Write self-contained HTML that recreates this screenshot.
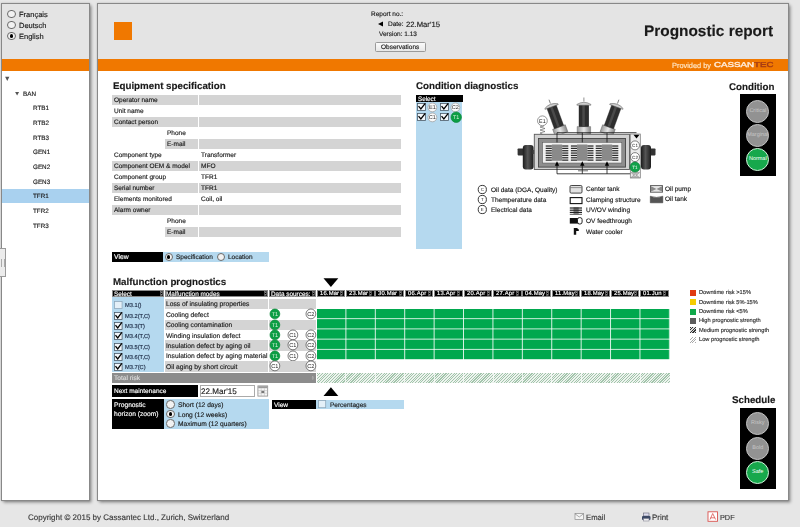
<!DOCTYPE html>
<html><head><meta charset="utf-8">
<style>
*{margin:0;padding:0;box-sizing:border-box}
html,body{width:800px;height:527px;overflow:hidden;background:#e6e6e6;font-family:"Liberation Sans",sans-serif;color:#111;position:relative}
.a{position:absolute}
.t{position:absolute;white-space:nowrap;line-height:1;-webkit-text-stroke:0.15px currentColor;will-change:transform;text-rendering:geometricPrecision}
.panel{position:absolute;background:#fff;border:1px solid #888;box-shadow:1.5px 1.5px 3px rgba(0,0,0,.38),0 0 2px rgba(0,0,0,.18)}
.radio{position:absolute;border-radius:50%;border:1px solid #6a6a6a;background:#f2f2f2}
.radio.on::after{content:"";position:absolute;left:22%;top:22%;right:22%;bottom:22%;border-radius:50%;background:#000}
.cb{position:absolute;border:1px solid #555;background:#f4f8fb}
svg{will-change:transform}
svg text{text-rendering:geometricPrecision}
.bd{position:absolute;border-radius:50%;text-align:center;white-space:nowrap;overflow:visible;font-family:"Liberation Sans",sans-serif}
</style></head><body>

<div class="panel" style="left:1px;top:3px;width:89px;height:498px;"></div>
<div class="a" style="left:2.00px;top:4.00px;width:87.00px;height:54.50px;background:#e4e4e4;"></div>
<div class="a" style="left:2.00px;top:58.50px;width:87.00px;height:12.40px;background:#f07800;"></div>
<div class="radio" style="left:7.10px;top:9.70px;width:8.60px;height:8.60px"></div>
<div class="t" style="left:19.00px;top:11.25px;font-size:7.5px;color:#1a1a1a;">Français</div>
<div class="radio" style="left:7.10px;top:20.60px;width:8.60px;height:8.60px"></div>
<div class="t" style="left:19.00px;top:22.15px;font-size:7.5px;color:#1a1a1a;">Deutsch</div>
<div class="radio on" style="left:7.10px;top:31.50px;width:8.60px;height:8.60px"></div>
<div class="t" style="left:19.00px;top:33.05px;font-size:7.5px;color:#1a1a1a;">English</div>
<div class="a" style="left:2.00px;top:189.30px;width:87.00px;height:13.90px;background:#a9d1ef;"></div>
<svg class="a" style="left:0;top:70px" width="25" height="30"><path d="M5.1 6.8 L9.4 6.8 L7.25 11.1 Z M15.1 21.9 L19.1 21.9 L17.1 25.6 Z" fill="#555"/></svg>
<div class="t" style="left:23.00px;top:92.37px;font-size:6.3px;color:#1a1a1a;">BAN</div>
<div class="t" style="left:33.00px;top:106.17px;font-size:6.3px;color:#1a1a1a;">RTB1</div>
<div class="t" style="left:33.00px;top:120.87px;font-size:6.3px;color:#1a1a1a;">RTB2</div>
<div class="t" style="left:33.00px;top:135.57px;font-size:6.3px;color:#1a1a1a;">RTB3</div>
<div class="t" style="left:33.00px;top:150.27px;font-size:6.3px;color:#1a1a1a;">GEN1</div>
<div class="t" style="left:33.00px;top:164.97px;font-size:6.3px;color:#1a1a1a;">GEN2</div>
<div class="t" style="left:33.00px;top:179.67px;font-size:6.3px;color:#1a1a1a;">GEN3</div>
<div class="t" style="left:33.00px;top:194.37px;font-size:6.3px;color:#1a1a1a;">TFR1</div>
<div class="t" style="left:33.00px;top:209.07px;font-size:6.3px;color:#1a1a1a;">TFR2</div>
<div class="t" style="left:33.00px;top:223.77px;font-size:6.3px;color:#1a1a1a;">TFR3</div>
<div class="a" style="left:0;top:248px;width:6px;height:29px;background:#ececec;border:1px solid #9a9a9a;border-left:none"></div>
<div class="a" style="left:1px;top:258.5px;width:3.5px;height:8px;border-left:0.8px solid #aaa;border-right:0.8px solid #aaa"></div>
<div class="panel" style="left:97px;top:3px;width:692px;height:498px;"></div>
<div class="a" style="left:98.00px;top:4.00px;width:690.00px;height:54.50px;background:#e4e4e4;"></div>
<div class="a" style="left:98.00px;top:58.50px;width:690.00px;height:12.40px;background:#f07800;"></div>
<div class="a" style="left:114.00px;top:22.00px;width:18.00px;height:18.00px;background:#f07800;"></div>
<div class="t" style="left:371.00px;top:11.70px;font-size:6.5px;color:#1a1a1a;">Report no.:</div>
<svg class="a" style="left:377px;top:21px" width="7" height="6"><path d="M1 3 L6 0.5 L6 5.5 Z" fill="#000"/></svg>
<div class="t" style="left:388.00px;top:22.20px;font-size:6.5px;color:#1a1a1a;">Date:</div>
<div class="t" style="left:406.00px;top:21.48px;font-size:7.7px;color:#1a1a1a;">22.Mar'15</div>
<div class="t" style="left:379.00px;top:31.70px;font-size:6.5px;color:#1a1a1a;">Version: 1.13</div>
<div class="a" style="left:375px;top:41.5px;width:51px;height:10.5px;border:1px solid #9a9a9a;border-radius:1.5px;background:linear-gradient(#fbfbfb,#e8e8e8)"></div>
<div class="t" style="left:381.00px;top:45.30px;font-size:6.5px;color:#1a1a1a;">Observations</div>
<div class="t" style="left:644.40px;top:24.16px;font-size:15.4px;font-weight:bold;color:#1a1a1a;">Prognostic report</div>
<div class="t" style="right:89.20px;top:62.14px;font-size:7.4px;color:#ffe7c8;">Provided by</div>
<div class="t" style="left:714px;top:61.8px;font-size:7.1px;line-height:1;transform:scaleX(1.375);transform-origin:0 0;-webkit-text-stroke:0.35px currentColor;color:#ffeede"><span>CASSAN</span><span style="color:#a43a14">TEC</span></div>
<div class="t" style="left:112.50px;top:81.95px;font-size:9.75px;font-weight:bold;color:#1a1a1a;">Equipment specification</div>
<div class="a" style="left:112.00px;top:95.00px;width:86.00px;height:10.00px;background:#d4d4d4;"></div>
<div class="a" style="left:199.20px;top:95.00px;width:202.00px;height:10.00px;background:#d4d4d4;"></div>
<div class="t" style="left:114.00px;top:97.70px;font-size:6.5px;color:#1a1a1a;">Operator name</div>
<div class="t" style="left:114.00px;top:108.70px;font-size:6.5px;color:#1a1a1a;">Unit name</div>
<div class="a" style="left:112.00px;top:117.00px;width:86.00px;height:10.00px;background:#d4d4d4;"></div>
<div class="a" style="left:199.20px;top:117.00px;width:202.00px;height:10.00px;background:#d4d4d4;"></div>
<div class="t" style="left:114.00px;top:119.70px;font-size:6.5px;color:#1a1a1a;">Contact person</div>
<div class="t" style="left:166.50px;top:130.70px;font-size:6.5px;color:#1a1a1a;">Phone</div>
<div class="a" style="left:164.50px;top:139.00px;width:33.50px;height:10.00px;background:#d4d4d4;"></div>
<div class="a" style="left:199.20px;top:139.00px;width:202.00px;height:10.00px;background:#d4d4d4;"></div>
<div class="t" style="left:166.50px;top:141.70px;font-size:6.5px;color:#1a1a1a;">E-mail</div>
<div class="t" style="left:114.00px;top:152.70px;font-size:6.5px;color:#1a1a1a;">Component type</div>
<div class="t" style="left:201.00px;top:152.70px;font-size:6.5px;color:#1a1a1a;">Transformer</div>
<div class="a" style="left:112.00px;top:161.00px;width:86.00px;height:10.00px;background:#d4d4d4;"></div>
<div class="a" style="left:199.20px;top:161.00px;width:202.00px;height:10.00px;background:#d4d4d4;"></div>
<div class="t" style="left:114.00px;top:163.70px;font-size:6.5px;color:#1a1a1a;">Component OEM &amp; model</div>
<div class="t" style="left:201.00px;top:163.70px;font-size:6.5px;color:#1a1a1a;">MFO</div>
<div class="t" style="left:114.00px;top:174.70px;font-size:6.5px;color:#1a1a1a;">Component group</div>
<div class="t" style="left:201.00px;top:174.70px;font-size:6.5px;color:#1a1a1a;">TFR1</div>
<div class="a" style="left:112.00px;top:183.00px;width:86.00px;height:10.00px;background:#d4d4d4;"></div>
<div class="a" style="left:199.20px;top:183.00px;width:202.00px;height:10.00px;background:#d4d4d4;"></div>
<div class="t" style="left:114.00px;top:185.70px;font-size:6.5px;color:#1a1a1a;">Serial number</div>
<div class="t" style="left:201.00px;top:185.70px;font-size:6.5px;color:#1a1a1a;">TFR1</div>
<div class="t" style="left:114.00px;top:196.70px;font-size:6.5px;color:#1a1a1a;">Elements monitored</div>
<div class="t" style="left:201.00px;top:196.70px;font-size:6.5px;color:#1a1a1a;">Coil, oil</div>
<div class="a" style="left:112.00px;top:205.00px;width:86.00px;height:10.00px;background:#d4d4d4;"></div>
<div class="a" style="left:199.20px;top:205.00px;width:202.00px;height:10.00px;background:#d4d4d4;"></div>
<div class="t" style="left:114.00px;top:207.70px;font-size:6.5px;color:#1a1a1a;">Alarm owner</div>
<div class="t" style="left:166.50px;top:218.70px;font-size:6.5px;color:#1a1a1a;">Phone</div>
<div class="a" style="left:164.50px;top:227.00px;width:33.50px;height:10.00px;background:#d4d4d4;"></div>
<div class="a" style="left:199.20px;top:227.00px;width:202.00px;height:10.00px;background:#d4d4d4;"></div>
<div class="t" style="left:166.50px;top:229.70px;font-size:6.5px;color:#1a1a1a;">E-mail</div>
<div class="a" style="left:112.40px;top:251.70px;width:51.00px;height:10.00px;background:#000;"></div>
<div class="t" style="left:114.00px;top:254.74px;font-size:6.8px;color:#fff;">View</div>
<div class="a" style="left:163.40px;top:251.70px;width:105.20px;height:10.00px;background:#b5d9ef;"></div>
<div class="radio on" style="left:164.75px;top:253.00px;width:8.00px;height:8.00px"></div>
<div class="t" style="left:175.80px;top:255.10px;font-size:6.5px;color:#1a1a1a;">Specification</div>
<div class="radio" style="left:216.80px;top:253.00px;width:8.00px;height:8.00px"></div>
<div class="t" style="left:227.80px;top:255.10px;font-size:6.5px;color:#1a1a1a;">Location</div>
<div class="t" style="left:416.00px;top:82.45px;font-size:9.75px;font-weight:bold;color:#1a1a1a;">Condition diagnostics</div>
<div class="a" style="left:416.00px;top:95.00px;width:46.50px;height:7.00px;background:#000;"></div>
<div class="t" style="left:417.50px;top:97.17px;font-size:6.3px;color:#fff;">Select</div>
<div class="a" style="left:416.00px;top:102.00px;width:46.20px;height:147.30px;background:#b5d9ef;"></div>
<svg class="a" style="left:416.70px;top:103.30px;overflow:visible" width="9.00" height="8.00" viewBox="-0.5 -0.5 9.00 8.00"><rect x="0" y="0" width="8.00" height="7.00" fill="#f2f6fa" stroke="#4a5a68" stroke-width="0.8"/><path d="M1.44 3.15 L3.36 5.46 L7.36 0.35" fill="none" stroke="#000" stroke-width="1.25" stroke-linecap="square"/></svg>
<svg class="a" style="left:440.20px;top:103.30px;overflow:visible" width="9.00" height="8.00" viewBox="-0.5 -0.5 9.00 8.00"><rect x="0" y="0" width="8.00" height="7.00" fill="#f2f6fa" stroke="#4a5a68" stroke-width="0.8"/><path d="M1.44 3.15 L3.36 5.46 L7.36 0.35" fill="none" stroke="#000" stroke-width="1.25" stroke-linecap="square"/></svg>
<svg class="a" style="left:416.70px;top:113.40px;overflow:visible" width="9.00" height="8.00" viewBox="-0.5 -0.5 9.00 8.00"><rect x="0" y="0" width="8.00" height="7.00" fill="#f2f6fa" stroke="#4a5a68" stroke-width="0.8"/><path d="M1.44 3.15 L3.36 5.46 L7.36 0.35" fill="none" stroke="#000" stroke-width="1.25" stroke-linecap="square"/></svg>
<svg class="a" style="left:440.20px;top:113.40px;overflow:visible" width="9.00" height="8.00" viewBox="-0.5 -0.5 9.00 8.00"><rect x="0" y="0" width="8.00" height="7.00" fill="#f2f6fa" stroke="#4a5a68" stroke-width="0.8"/><path d="M1.44 3.15 L3.36 5.46 L7.36 0.35" fill="none" stroke="#000" stroke-width="1.25" stroke-linecap="square"/></svg>
<svg class="a" style="left:426.80px;top:101.90px;overflow:visible" width="10.80" height="10.80"><circle cx="5.40" cy="5.40" r="4.40" fill="#fafafa" stroke="#9a9a9a" stroke-width="0.7"/><g transform="translate(5.40 7.42) scale(0.1)"><text x="0" y="0" font-size="56.0" text-anchor="middle" fill="#333" font-family="Liberation Sans">E1</text></g></svg>
<svg class="a" style="left:449.60px;top:101.90px;overflow:visible" width="10.80" height="10.80"><circle cx="5.40" cy="5.40" r="4.40" fill="#fafafa" stroke="#9a9a9a" stroke-width="0.7"/><g transform="translate(5.40 7.42) scale(0.1)"><text x="0" y="0" font-size="56.0" text-anchor="middle" fill="#333" font-family="Liberation Sans">C2</text></g></svg>
<svg class="a" style="left:426.80px;top:112.10px;overflow:visible" width="10.80" height="10.80"><circle cx="5.40" cy="5.40" r="4.40" fill="#fafafa" stroke="#9a9a9a" stroke-width="0.7"/><g transform="translate(5.40 7.42) scale(0.1)"><text x="0" y="0" font-size="56.0" text-anchor="middle" fill="#333" font-family="Liberation Sans">C1</text></g></svg>
<svg class="a" style="left:449.50px;top:111.30px;overflow:visible" width="12.40" height="12.40"><circle cx="6.20" cy="6.20" r="5.20" fill="#0c9e45" stroke="#0a8a3a" stroke-width="0.7"/><g transform="translate(6.20 8.14) scale(0.1)"><text x="0" y="0" font-size="54.0" text-anchor="middle" fill="#d8f5dc" font-family="Liberation Sans">T1</text></g></svg>
<svg class="a" style="left:510px;top:90px" width="150" height="95" viewBox="510 90 150 95">
<defs><linearGradient id="wg" x1="0" x2="1"><stop offset="0" stop-color="#1c1c1c"/><stop offset="0.45" stop-color="#555"/><stop offset="1" stop-color="#1e1e1e"/></linearGradient><linearGradient id="bg" x1="0" x2="1"><stop offset="0" stop-color="#9a9a9a"/><stop offset="0.5" stop-color="#e8e8e8"/><stop offset="1" stop-color="#888"/></linearGradient></defs>
<rect x="517.6" y="148.4" width="6" height="7" fill="#333" rx="0.8"/>
<rect x="522.8" y="144.9" width="10.8" height="24.5" rx="3" fill="url(#wg)"/>
<rect x="650" y="148.4" width="5.5" height="7" fill="#333" rx="0.8"/>
<rect x="641" y="144.9" width="10" height="24.5" rx="3" fill="url(#wg)"/>
<rect x="532.5" y="150" width="2" height="4" fill="#444"/>
<g transform="rotate(0 583.9 134)"><path d="M577.1999999999999 134 L590.6 134 L590.6 126.6 L577.1999999999999 126.6 Z" fill="url(#bg)" stroke="#666" stroke-width="0.5"/><rect x="579.0" y="104.2" width="9.8" height="22.4" fill="#2e2e2e" stroke="#222" stroke-width="0.4"/><rect x="582.3" y="105" width="2.5" height="21" fill="#4a4a4a"/><path d="M576.9 104.4 Q583.9 100.2 590.9 104.4 L590.9 105.2 L576.9 105.2 Z" fill="#cfcfcf" stroke="#555" stroke-width="0.5"/><path d="M583.9 101.5 V97.5" stroke="#444" stroke-width="0.6"/></g>
<g transform="rotate(-20 561.5 134)"><path d="M554.8 134 L568.2 134 L568.2 126.6 L554.8 126.6 Z" fill="url(#bg)" stroke="#666" stroke-width="0.5"/><rect x="556.6" y="104.2" width="9.8" height="22.4" fill="#2e2e2e" stroke="#222" stroke-width="0.4"/><rect x="559.9" y="105" width="2.5" height="21" fill="#4a4a4a"/><path d="M554.5 104.4 Q561.5 100.2 568.5 104.4 L568.5 105.2 L554.5 105.2 Z" fill="#cfcfcf" stroke="#555" stroke-width="0.5"/><path d="M561.5 101.5 V97.5" stroke="#444" stroke-width="0.6"/></g>
<g transform="rotate(20 606.4 134)"><path d="M599.6999999999999 134 L613.1 134 L613.1 126.6 L599.6999999999999 126.6 Z" fill="url(#bg)" stroke="#666" stroke-width="0.5"/><rect x="601.5" y="104.2" width="9.8" height="22.4" fill="#2e2e2e" stroke="#222" stroke-width="0.4"/><rect x="604.8" y="105" width="2.5" height="21" fill="#4a4a4a"/><path d="M599.4 104.4 Q606.4 100.2 613.4 104.4 L613.4 105.2 L599.4 105.2 Z" fill="#cfcfcf" stroke="#555" stroke-width="0.5"/><path d="M606.4 101.5 V97.5" stroke="#444" stroke-width="0.6"/></g>
<rect x="534.3" y="134.3" width="95.2" height="35.2" fill="#d2d2d2" stroke="#5a5a5a" stroke-width="0.9"/>
<rect x="538.5" y="138.5" width="87" height="28.6" fill="#8e8e8e" stroke="#444" stroke-width="0.9"/>
<rect x="542.6" y="142.4" width="79.2" height="20.6" fill="#f0f0f0" stroke="#555" stroke-width="0.5"/>
<rect x="551.80" y="144.5" width="10.4" height="16.3" fill="#8a8a8a"/>
<rect x="545.70" y="145.40" width="6.1" height="1.25" fill="#2a2a2a"/>
<rect x="562.20" y="145.40" width="6.1" height="1.25" fill="#2a2a2a"/>
<rect x="545.70" y="147.75" width="6.1" height="1.25" fill="#2a2a2a"/>
<rect x="562.20" y="147.75" width="6.1" height="1.25" fill="#2a2a2a"/>
<rect x="545.70" y="150.10" width="6.1" height="1.25" fill="#2a2a2a"/>
<rect x="562.20" y="150.10" width="6.1" height="1.25" fill="#2a2a2a"/>
<rect x="545.70" y="152.45" width="6.1" height="1.25" fill="#2a2a2a"/>
<rect x="562.20" y="152.45" width="6.1" height="1.25" fill="#2a2a2a"/>
<rect x="545.70" y="154.80" width="6.1" height="1.25" fill="#2a2a2a"/>
<rect x="562.20" y="154.80" width="6.1" height="1.25" fill="#2a2a2a"/>
<rect x="545.70" y="157.15" width="6.1" height="1.25" fill="#2a2a2a"/>
<rect x="562.20" y="157.15" width="6.1" height="1.25" fill="#2a2a2a"/>
<rect x="545.70" y="159.50" width="6.1" height="1.25" fill="#2a2a2a"/>
<rect x="562.20" y="159.50" width="6.1" height="1.25" fill="#2a2a2a"/>
<rect x="577.00" y="144.5" width="10.4" height="16.3" fill="#8a8a8a"/>
<rect x="570.90" y="145.40" width="6.1" height="1.25" fill="#2a2a2a"/>
<rect x="587.40" y="145.40" width="6.1" height="1.25" fill="#2a2a2a"/>
<rect x="570.90" y="147.75" width="6.1" height="1.25" fill="#2a2a2a"/>
<rect x="587.40" y="147.75" width="6.1" height="1.25" fill="#2a2a2a"/>
<rect x="570.90" y="150.10" width="6.1" height="1.25" fill="#2a2a2a"/>
<rect x="587.40" y="150.10" width="6.1" height="1.25" fill="#2a2a2a"/>
<rect x="570.90" y="152.45" width="6.1" height="1.25" fill="#2a2a2a"/>
<rect x="587.40" y="152.45" width="6.1" height="1.25" fill="#2a2a2a"/>
<rect x="570.90" y="154.80" width="6.1" height="1.25" fill="#2a2a2a"/>
<rect x="587.40" y="154.80" width="6.1" height="1.25" fill="#2a2a2a"/>
<rect x="570.90" y="157.15" width="6.1" height="1.25" fill="#2a2a2a"/>
<rect x="587.40" y="157.15" width="6.1" height="1.25" fill="#2a2a2a"/>
<rect x="570.90" y="159.50" width="6.1" height="1.25" fill="#2a2a2a"/>
<rect x="587.40" y="159.50" width="6.1" height="1.25" fill="#2a2a2a"/>
<rect x="601.80" y="144.5" width="10.4" height="16.3" fill="#8a8a8a"/>
<rect x="595.70" y="145.40" width="6.1" height="1.25" fill="#2a2a2a"/>
<rect x="612.20" y="145.40" width="6.1" height="1.25" fill="#2a2a2a"/>
<rect x="595.70" y="147.75" width="6.1" height="1.25" fill="#2a2a2a"/>
<rect x="612.20" y="147.75" width="6.1" height="1.25" fill="#2a2a2a"/>
<rect x="595.70" y="150.10" width="6.1" height="1.25" fill="#2a2a2a"/>
<rect x="612.20" y="150.10" width="6.1" height="1.25" fill="#2a2a2a"/>
<rect x="595.70" y="152.45" width="6.1" height="1.25" fill="#2a2a2a"/>
<rect x="612.20" y="152.45" width="6.1" height="1.25" fill="#2a2a2a"/>
<rect x="595.70" y="154.80" width="6.1" height="1.25" fill="#2a2a2a"/>
<rect x="612.20" y="154.80" width="6.1" height="1.25" fill="#2a2a2a"/>
<rect x="595.70" y="157.15" width="6.1" height="1.25" fill="#2a2a2a"/>
<rect x="612.20" y="157.15" width="6.1" height="1.25" fill="#2a2a2a"/>
<rect x="595.70" y="159.50" width="6.1" height="1.25" fill="#2a2a2a"/>
<rect x="612.20" y="159.50" width="6.1" height="1.25" fill="#2a2a2a"/>
<path d="M557 132.7 H636.5 M557 132.7 V142.4 M582.3 132.7 V142.4 M607 132.7 V142.4" stroke="#111" stroke-width="0.8" fill="none"/>
<path d="M557 165 V173.8 H637 M582.3 165 V173.8 M607 165 V173.8" stroke="#111" stroke-width="0.8" fill="none"/>
<path d="M554.80 165.8 L559.20 165.8 L557.00 161.3 Z" fill="#000"/>
<path d="M580.10 165.8 L584.50 165.8 L582.30 161.3 Z" fill="#000"/>
<path d="M604.80 165.8 L609.20 165.8 L607.00 161.3 Z" fill="#000"/>
<path d="M578 170.8 H588" stroke="#333" stroke-width="0.7"/>
<rect x="630.3" y="134" width="10" height="44" fill="#ececec" stroke="#777" stroke-width="0.7"/>
<path d="M633.5 134.8 L639.5 134.8 L636.5 138.5 Z" fill="#000"/>
<path d="M631 172.5 L639.5 172.5 L635.2 176.5 Z M631 177.5 L639.5 177.5 L635.2 174 Z" fill="#bbb" stroke="#777" stroke-width="0.4"/>
<path d="M542.4 134 L540 133 L545 131.5 L540 130 L545 128.5 L540 127 L544 126" stroke="#555" stroke-width="0.6" fill="none"/>
<circle cx="542.4" cy="120.8" r="4.9" fill="#fff" stroke="#555" stroke-width="0.6"/>
<text x="542.4" y="122.8" font-size="5.4" text-anchor="middle" fill="#222" font-family="Liberation Sans">E1</text>
<circle cx="635" cy="145.4" r="4.5" fill="#fff" stroke="#333" stroke-width="0.6"/>
<text x="635" y="147.1" font-size="4.6" text-anchor="middle" fill="#222" font-family="Liberation Sans">C1</text>
<circle cx="635" cy="157.1" r="4.5" fill="#fff" stroke="#333" stroke-width="0.6"/>
<text x="635" y="158.8" font-size="4.6" text-anchor="middle" fill="#222" font-family="Liberation Sans">C2</text>
<circle cx="635" cy="167.1" r="5" fill="#12a24a" stroke="#0b7a36" stroke-width="0.6"/>
<text x="635" y="168.8" font-size="4.6" text-anchor="middle" fill="#fff" font-family="Liberation Sans">T1</text>
</svg>
<svg class="a" style="left:477px;top:183.80px" width="11" height="11"><circle cx="5.3" cy="5.5" r="4.1" fill="#fff" stroke="#222" stroke-width="0.9"/><text x="5.3" y="7.1" font-size="4.4" text-anchor="middle" fill="#222" font-family="Liberation Sans">C</text></svg>
<div class="t" style="left:490.50px;top:187.67px;font-size:6.5px;color:#1a1a1a">Oil data (DGA, Quality)</div>
<svg class="a" style="left:477px;top:193.90px" width="11" height="11"><circle cx="5.3" cy="5.5" r="4.1" fill="#fff" stroke="#222" stroke-width="0.9"/><text x="5.3" y="7.1" font-size="4.4" text-anchor="middle" fill="#222" font-family="Liberation Sans">T</text></svg>
<div class="t" style="left:490.50px;top:197.77px;font-size:6.5px;color:#1a1a1a">Themperature data</div>
<svg class="a" style="left:477px;top:204.00px" width="11" height="11"><circle cx="5.3" cy="5.5" r="4.1" fill="#fff" stroke="#222" stroke-width="0.9"/><text x="5.3" y="7.1" font-size="4.4" text-anchor="middle" fill="#222" font-family="Liberation Sans">E</text></svg>
<div class="t" style="left:490.50px;top:207.87px;font-size:6.5px;color:#1a1a1a">Electrical data</div>
<svg class="a" style="left:568px;top:183px" width="20" height="55" viewBox="568 183 20 55"><rect x="570" y="185.5" width="12" height="7.6" rx="1.2" fill="#e2e2e2" stroke="#333" stroke-width="0.9"/><path d="M570.5 187.6 H581.5" stroke="#555" stroke-width="0.6"/><rect x="570.2" y="197.6" width="11.8" height="6" fill="#fff" stroke="#111" stroke-width="1.1"/><rect x="573.5" y="207.3" width="5.2" height="7" fill="#888"/><rect x="569.8" y="207.4" width="12.2" height="1.2" fill="#222"/><rect x="569.8" y="209.6" width="12.2" height="1.2" fill="#222"/><rect x="569.8" y="211.8" width="12.2" height="1.2" fill="#222"/><rect x="569.8" y="213.8" width="12.2" height="1.0" fill="#555"/><rect x="569.8" y="218" width="9" height="5.6" fill="#111"/><rect x="577.5" y="217.6" width="4.6" height="6.4" rx="2" fill="#fff" stroke="#111" stroke-width="0.9"/><path d="M573.8 228 H577 L578.8 229.5 L578.8 231 L576.2 231 L576.2 234.7 L573.8 234.7 Z" fill="#111"/></svg>
<div class="t" style="left:585.60px;top:187.47px;font-size:6.5px;color:#1a1a1a">Center tank</div>
<div class="t" style="left:585.60px;top:198.27px;font-size:6.5px;color:#1a1a1a">Clamping structure</div>
<div class="t" style="left:585.60px;top:208.17px;font-size:6.5px;color:#1a1a1a">UV/OV winding</div>
<div class="t" style="left:585.60px;top:218.77px;font-size:6.5px;color:#1a1a1a">OV feedthrough</div>
<div class="t" style="left:585.60px;top:229.87px;font-size:6.5px;color:#1a1a1a">Water cooler</div>
<svg class="a" style="left:649px;top:184px" width="16" height="20" viewBox="649 184 16 20"><rect x="650.5" y="185.6" width="12" height="6.6" fill="#e6e6e6" stroke="#555" stroke-width="0.9"/><path d="M651 186.2 L656.5 188.9 L651 191.6 Z M662 186.2 L656.5 188.9 L662 191.6 Z" fill="#8a8a8a"/><path d="M650.3 196.2 V202.8 H662.8 V196.2 Q656.5 198.6 650.3 196.2 Z" fill="#555" stroke="#333" stroke-width="0.5"/></svg>
<div class="t" style="left:665.10px;top:186.97px;font-size:6.5px;color:#1a1a1a">Oil pump</div>
<div class="t" style="left:665.10px;top:197.47px;font-size:6.5px;color:#1a1a1a">Oil tank</div>
<div class="t" style="left:729.00px;top:82.95px;font-size:9.75px;font-weight:bold;color:#1a1a1a;">Condition</div>
<div class="a" style="left:740.00px;top:94.30px;width:35.80px;height:81.30px;background:#000;"></div>
<div class="bd" style="left:746.20px;top:100.00px;width:23.2px;height:23.2px;background:#929292;border:1px solid #c2c2c2;color:#c6c6c6;font-size:5.5px;line-height:21.2px;text-rendering:geometricPrecision">Critical</div>
<div class="bd" style="left:746.20px;top:123.90px;width:23.2px;height:23.2px;background:#929292;border:1px solid #c2c2c2;color:#c6c6c6;font-size:5.5px;line-height:21.2px;text-rendering:geometricPrecision">Marginal</div>
<div class="bd" style="left:746.20px;top:147.80px;width:23.2px;height:23.2px;background:#17a84c;border:1px solid #d0f2da;color:#ffffff;font-size:5.5px;line-height:21.2px;text-rendering:geometricPrecision">Normal</div>
<div class="t" style="left:112.50px;top:278.15px;font-size:9.75px;font-weight:bold;color:#1a1a1a;">Malfunction prognostics</div>
<svg class="a" style="left:323px;top:278px" width="16" height="10"><path d="M0.5 0.3 L15.3 0.3 L7.9 9 Z" fill="#000"/></svg>
<div class="a" style="left:112.00px;top:290.2px;width:51.50px;height:7.3px;background:#000;border:0.6px solid #8a8a8a"></div>
<div class="t" style="left:113.60px;top:292.08px;font-size:6.4px;color:#ffffff;letter-spacing:0px">Select</div>
<svg class="a" style="left:159.50px;top:291.3px" width="3" height="5"><rect x="0.3" y="0.3" width="2.2" height="4.4" fill="none" stroke="#999" stroke-width="0.5"/><path d="M0.7 2.1 L1.4 1.0 L2.1 2.1 Z M0.7 2.9 L1.4 4.0 L2.1 2.9 Z" fill="#ccc"/></svg>
<div class="a" style="left:164.70px;top:290.2px;width:103.30px;height:7.3px;background:#000;border:0.6px solid #8a8a8a"></div>
<div class="t" style="left:166.30px;top:292.08px;font-size:6.4px;color:#ffffff;letter-spacing:0px">Malfunction modes</div>
<svg class="a" style="left:264.00px;top:291.3px" width="3" height="5"><rect x="0.3" y="0.3" width="2.2" height="4.4" fill="none" stroke="#999" stroke-width="0.5"/><path d="M0.7 2.1 L1.4 1.0 L2.1 2.1 Z M0.7 2.9 L1.4 4.0 L2.1 2.9 Z" fill="#ccc"/></svg>
<div class="a" style="left:269.40px;top:290.2px;width:46.60px;height:7.3px;background:#000;border:0.6px solid #8a8a8a"></div>
<div class="t" style="left:271.20px;top:292.08px;font-size:6.4px;color:#ffffff;letter-spacing:0px">Data sources:</div>
<svg class="a" style="left:312.00px;top:291.3px" width="3" height="5"><rect x="0.3" y="0.3" width="2.2" height="4.4" fill="none" stroke="#999" stroke-width="0.5"/><path d="M0.7 2.1 L1.4 1.0 L2.1 2.1 Z M0.7 2.9 L1.4 4.0 L2.1 2.9 Z" fill="#ccc"/></svg>
<div class="a" style="left:316.50px;top:290.2px;width:28.60px;height:7.3px;background:#000;border:0.6px solid #8a8a8a"></div>
<div class="t" style="left:319.50px;top:292.21px;font-size:5.9px;color:#ffffff;letter-spacing:0.15px">16.Mar</div>
<svg class="a" style="left:339.80px;top:291.3px" width="3" height="5"><rect x="0.3" y="0.3" width="2.2" height="4.4" fill="none" stroke="#999" stroke-width="0.5"/><path d="M0.7 2.1 L1.4 1.0 L2.1 2.1 Z M0.7 2.9 L1.4 4.0 L2.1 2.9 Z" fill="#ccc"/></svg>
<div class="a" style="left:345.92px;top:290.2px;width:28.60px;height:7.3px;background:#000;border:0.6px solid #8a8a8a"></div>
<div class="t" style="left:348.92px;top:292.21px;font-size:5.9px;color:#ffffff;letter-spacing:0.15px">23.Mar</div>
<svg class="a" style="left:369.22px;top:291.3px" width="3" height="5"><rect x="0.3" y="0.3" width="2.2" height="4.4" fill="none" stroke="#999" stroke-width="0.5"/><path d="M0.7 2.1 L1.4 1.0 L2.1 2.1 Z M0.7 2.9 L1.4 4.0 L2.1 2.9 Z" fill="#ccc"/></svg>
<div class="a" style="left:375.34px;top:290.2px;width:28.60px;height:7.3px;background:#000;border:0.6px solid #8a8a8a"></div>
<div class="t" style="left:378.34px;top:292.21px;font-size:5.9px;color:#ffffff;letter-spacing:0.15px">30.Mar</div>
<svg class="a" style="left:398.64px;top:291.3px" width="3" height="5"><rect x="0.3" y="0.3" width="2.2" height="4.4" fill="none" stroke="#999" stroke-width="0.5"/><path d="M0.7 2.1 L1.4 1.0 L2.1 2.1 Z M0.7 2.9 L1.4 4.0 L2.1 2.9 Z" fill="#ccc"/></svg>
<div class="a" style="left:404.76px;top:290.2px;width:28.60px;height:7.3px;background:#000;border:0.6px solid #8a8a8a"></div>
<div class="t" style="left:407.76px;top:292.21px;font-size:5.9px;color:#ffffff;letter-spacing:0.15px">06.Apr</div>
<svg class="a" style="left:428.06px;top:291.3px" width="3" height="5"><rect x="0.3" y="0.3" width="2.2" height="4.4" fill="none" stroke="#999" stroke-width="0.5"/><path d="M0.7 2.1 L1.4 1.0 L2.1 2.1 Z M0.7 2.9 L1.4 4.0 L2.1 2.9 Z" fill="#ccc"/></svg>
<div class="a" style="left:434.18px;top:290.2px;width:28.60px;height:7.3px;background:#000;border:0.6px solid #8a8a8a"></div>
<div class="t" style="left:437.18px;top:292.21px;font-size:5.9px;color:#ffffff;letter-spacing:0.15px">13.Apr</div>
<svg class="a" style="left:457.48px;top:291.3px" width="3" height="5"><rect x="0.3" y="0.3" width="2.2" height="4.4" fill="none" stroke="#999" stroke-width="0.5"/><path d="M0.7 2.1 L1.4 1.0 L2.1 2.1 Z M0.7 2.9 L1.4 4.0 L2.1 2.9 Z" fill="#ccc"/></svg>
<div class="a" style="left:463.60px;top:290.2px;width:28.60px;height:7.3px;background:#000;border:0.6px solid #8a8a8a"></div>
<div class="t" style="left:466.60px;top:292.21px;font-size:5.9px;color:#ffffff;letter-spacing:0.15px">20.Apr</div>
<svg class="a" style="left:486.90px;top:291.3px" width="3" height="5"><rect x="0.3" y="0.3" width="2.2" height="4.4" fill="none" stroke="#999" stroke-width="0.5"/><path d="M0.7 2.1 L1.4 1.0 L2.1 2.1 Z M0.7 2.9 L1.4 4.0 L2.1 2.9 Z" fill="#ccc"/></svg>
<div class="a" style="left:493.02px;top:290.2px;width:28.60px;height:7.3px;background:#000;border:0.6px solid #8a8a8a"></div>
<div class="t" style="left:496.02px;top:292.21px;font-size:5.9px;color:#ffffff;letter-spacing:0.15px">27.Apr</div>
<svg class="a" style="left:516.32px;top:291.3px" width="3" height="5"><rect x="0.3" y="0.3" width="2.2" height="4.4" fill="none" stroke="#999" stroke-width="0.5"/><path d="M0.7 2.1 L1.4 1.0 L2.1 2.1 Z M0.7 2.9 L1.4 4.0 L2.1 2.9 Z" fill="#ccc"/></svg>
<div class="a" style="left:522.44px;top:290.2px;width:28.60px;height:7.3px;background:#000;border:0.6px solid #8a8a8a"></div>
<div class="t" style="left:525.44px;top:292.21px;font-size:5.9px;color:#ffffff;letter-spacing:0.15px">04.May</div>
<svg class="a" style="left:545.74px;top:291.3px" width="3" height="5"><rect x="0.3" y="0.3" width="2.2" height="4.4" fill="none" stroke="#999" stroke-width="0.5"/><path d="M0.7 2.1 L1.4 1.0 L2.1 2.1 Z M0.7 2.9 L1.4 4.0 L2.1 2.9 Z" fill="#ccc"/></svg>
<div class="a" style="left:551.86px;top:290.2px;width:28.60px;height:7.3px;background:#000;border:0.6px solid #8a8a8a"></div>
<div class="t" style="left:554.86px;top:292.21px;font-size:5.9px;color:#ffffff;letter-spacing:0.15px">11.May</div>
<svg class="a" style="left:575.16px;top:291.3px" width="3" height="5"><rect x="0.3" y="0.3" width="2.2" height="4.4" fill="none" stroke="#999" stroke-width="0.5"/><path d="M0.7 2.1 L1.4 1.0 L2.1 2.1 Z M0.7 2.9 L1.4 4.0 L2.1 2.9 Z" fill="#ccc"/></svg>
<div class="a" style="left:581.28px;top:290.2px;width:28.60px;height:7.3px;background:#000;border:0.6px solid #8a8a8a"></div>
<div class="t" style="left:584.28px;top:292.21px;font-size:5.9px;color:#ffffff;letter-spacing:0.15px">18.May</div>
<svg class="a" style="left:604.58px;top:291.3px" width="3" height="5"><rect x="0.3" y="0.3" width="2.2" height="4.4" fill="none" stroke="#999" stroke-width="0.5"/><path d="M0.7 2.1 L1.4 1.0 L2.1 2.1 Z M0.7 2.9 L1.4 4.0 L2.1 2.9 Z" fill="#ccc"/></svg>
<div class="a" style="left:610.70px;top:290.2px;width:28.60px;height:7.3px;background:#000;border:0.6px solid #8a8a8a"></div>
<div class="t" style="left:613.70px;top:292.21px;font-size:5.9px;color:#ffffff;letter-spacing:0.15px">25.May</div>
<svg class="a" style="left:634.00px;top:291.3px" width="3" height="5"><rect x="0.3" y="0.3" width="2.2" height="4.4" fill="none" stroke="#999" stroke-width="0.5"/><path d="M0.7 2.1 L1.4 1.0 L2.1 2.1 Z M0.7 2.9 L1.4 4.0 L2.1 2.9 Z" fill="#ccc"/></svg>
<div class="a" style="left:640.12px;top:290.2px;width:28.60px;height:7.3px;background:#000;border:0.6px solid #8a8a8a"></div>
<div class="t" style="left:643.12px;top:292.21px;font-size:5.9px;color:#ffffff;letter-spacing:0.15px">01.Jun</div>
<svg class="a" style="left:663.42px;top:291.3px" width="3" height="5"><rect x="0.3" y="0.3" width="2.2" height="4.4" fill="none" stroke="#999" stroke-width="0.5"/><path d="M0.7 2.1 L1.4 1.0 L2.1 2.1 Z M0.7 2.9 L1.4 4.0 L2.1 2.9 Z" fill="#ccc"/></svg>
<div class="a" style="left:112.00px;top:297.30px;width:51.70px;height:74.70px;background:#b5d9ef;"></div>
<div class="a" style="left:164.70px;top:299.00px;width:103.30px;height:10.36px;background:#d4d4d4;"></div>
<div class="a" style="left:269.40px;top:299.00px;width:46.80px;height:10.36px;background:#d4d4d4;"></div>
<svg class="a" style="left:114.30px;top:301.30px;overflow:visible" width="8.60" height="8.00" viewBox="-0.5 -0.5 8.60 8.00"><rect x="0" y="0" width="7.60" height="7.00" fill="#e4f0f8" stroke="#8fa8bb" stroke-width="0.8"/></svg>
<div class="t" style="left:125.00px;top:304.17px;font-size:5.7px;color:#1c2a44;">M3.1()</div>
<div class="t" style="left:166.40px;top:302.43px;font-size:6.7px;color:#1a1a1a;">Loss of insulating properties</div>
<svg class="a" style="left:114.30px;top:311.66px;overflow:visible" width="8.60" height="8.00" viewBox="-0.5 -0.5 8.60 8.00"><rect x="0" y="0" width="7.60" height="7.00" fill="#f2f6fa" stroke="#4a5a68" stroke-width="0.8"/><path d="M1.37 3.15 L3.19 5.46 L6.99 0.35" fill="none" stroke="#000" stroke-width="1.25" stroke-linecap="square"/></svg>
<div class="t" style="left:125.00px;top:314.53px;font-size:5.7px;color:#1c2a44;">M3.2(T,C)</div>
<div class="t" style="left:166.40px;top:312.79px;font-size:6.7px;color:#1a1a1a;">Cooling defect</div>
<svg class="a" style="left:269.30px;top:308.14px;overflow:visible" width="11.80" height="11.80"><circle cx="5.90" cy="5.90" r="4.90" fill="#0c9e45" stroke="#0a8a3a" stroke-width="0.7"/><g transform="translate(5.90 7.92) scale(0.1)"><text x="0" y="0" font-size="56.0" text-anchor="middle" fill="#d8f5dc" font-family="Liberation Sans">T1</text></g></svg>
<svg class="a" style="left:304.50px;top:308.14px;overflow:visible" width="11.80" height="11.80"><circle cx="5.90" cy="5.90" r="4.90" fill="#fff" stroke="#444" stroke-width="0.7"/><g transform="translate(5.90 7.92) scale(0.1)"><text x="0" y="0" font-size="56.0" text-anchor="middle" fill="#222" font-family="Liberation Sans">C2</text></g></svg>
<div class="a" style="left:164.70px;top:319.72px;width:103.30px;height:10.36px;background:#d4d4d4;"></div>
<div class="a" style="left:269.40px;top:319.72px;width:46.80px;height:10.36px;background:#d4d4d4;"></div>
<svg class="a" style="left:114.30px;top:322.02px;overflow:visible" width="8.60" height="8.00" viewBox="-0.5 -0.5 8.60 8.00"><rect x="0" y="0" width="7.60" height="7.00" fill="#f2f6fa" stroke="#4a5a68" stroke-width="0.8"/><path d="M1.37 3.15 L3.19 5.46 L6.99 0.35" fill="none" stroke="#000" stroke-width="1.25" stroke-linecap="square"/></svg>
<div class="t" style="left:125.00px;top:324.89px;font-size:5.7px;color:#1c2a44;">M3.3(T)</div>
<div class="t" style="left:166.40px;top:323.15px;font-size:6.7px;color:#1a1a1a;">Cooling contamination</div>
<svg class="a" style="left:269.30px;top:318.50px;overflow:visible" width="11.80" height="11.80"><circle cx="5.90" cy="5.90" r="4.90" fill="#0c9e45" stroke="#0a8a3a" stroke-width="0.7"/><g transform="translate(5.90 7.92) scale(0.1)"><text x="0" y="0" font-size="56.0" text-anchor="middle" fill="#d8f5dc" font-family="Liberation Sans">T1</text></g></svg>
<svg class="a" style="left:114.30px;top:332.38px;overflow:visible" width="8.60" height="8.00" viewBox="-0.5 -0.5 8.60 8.00"><rect x="0" y="0" width="7.60" height="7.00" fill="#f2f6fa" stroke="#4a5a68" stroke-width="0.8"/><path d="M1.37 3.15 L3.19 5.46 L6.99 0.35" fill="none" stroke="#000" stroke-width="1.25" stroke-linecap="square"/></svg>
<div class="t" style="left:125.00px;top:335.25px;font-size:5.7px;color:#1c2a44;">M3.4(T,C)</div>
<div class="t" style="left:166.40px;top:333.51px;font-size:6.7px;color:#1a1a1a;">Winding insulation defect</div>
<svg class="a" style="left:269.30px;top:328.86px;overflow:visible" width="11.80" height="11.80"><circle cx="5.90" cy="5.90" r="4.90" fill="#0c9e45" stroke="#0a8a3a" stroke-width="0.7"/><g transform="translate(5.90 7.92) scale(0.1)"><text x="0" y="0" font-size="56.0" text-anchor="middle" fill="#d8f5dc" font-family="Liberation Sans">T1</text></g></svg>
<svg class="a" style="left:286.90px;top:328.86px;overflow:visible" width="11.80" height="11.80"><circle cx="5.90" cy="5.90" r="4.90" fill="#fff" stroke="#444" stroke-width="0.7"/><g transform="translate(5.90 7.92) scale(0.1)"><text x="0" y="0" font-size="56.0" text-anchor="middle" fill="#222" font-family="Liberation Sans">C1</text></g></svg>
<svg class="a" style="left:304.50px;top:328.86px;overflow:visible" width="11.80" height="11.80"><circle cx="5.90" cy="5.90" r="4.90" fill="#fff" stroke="#444" stroke-width="0.7"/><g transform="translate(5.90 7.92) scale(0.1)"><text x="0" y="0" font-size="56.0" text-anchor="middle" fill="#222" font-family="Liberation Sans">C2</text></g></svg>
<div class="a" style="left:164.70px;top:340.44px;width:103.30px;height:10.36px;background:#d4d4d4;"></div>
<div class="a" style="left:269.40px;top:340.44px;width:46.80px;height:10.36px;background:#d4d4d4;"></div>
<svg class="a" style="left:114.30px;top:342.74px;overflow:visible" width="8.60" height="8.00" viewBox="-0.5 -0.5 8.60 8.00"><rect x="0" y="0" width="7.60" height="7.00" fill="#f2f6fa" stroke="#4a5a68" stroke-width="0.8"/><path d="M1.37 3.15 L3.19 5.46 L6.99 0.35" fill="none" stroke="#000" stroke-width="1.25" stroke-linecap="square"/></svg>
<div class="t" style="left:125.00px;top:345.61px;font-size:5.7px;color:#1c2a44;">M3.5(T,C)</div>
<div class="t" style="left:166.40px;top:343.87px;font-size:6.7px;color:#1a1a1a;">Insulation defect by aging oil</div>
<svg class="a" style="left:269.30px;top:339.22px;overflow:visible" width="11.80" height="11.80"><circle cx="5.90" cy="5.90" r="4.90" fill="#0c9e45" stroke="#0a8a3a" stroke-width="0.7"/><g transform="translate(5.90 7.92) scale(0.1)"><text x="0" y="0" font-size="56.0" text-anchor="middle" fill="#d8f5dc" font-family="Liberation Sans">T1</text></g></svg>
<svg class="a" style="left:286.90px;top:339.22px;overflow:visible" width="11.80" height="11.80"><circle cx="5.90" cy="5.90" r="4.90" fill="#fff" stroke="#444" stroke-width="0.7"/><g transform="translate(5.90 7.92) scale(0.1)"><text x="0" y="0" font-size="56.0" text-anchor="middle" fill="#222" font-family="Liberation Sans">C1</text></g></svg>
<svg class="a" style="left:304.50px;top:339.22px;overflow:visible" width="11.80" height="11.80"><circle cx="5.90" cy="5.90" r="4.90" fill="#fff" stroke="#444" stroke-width="0.7"/><g transform="translate(5.90 7.92) scale(0.1)"><text x="0" y="0" font-size="56.0" text-anchor="middle" fill="#222" font-family="Liberation Sans">C2</text></g></svg>
<svg class="a" style="left:114.30px;top:353.10px;overflow:visible" width="8.60" height="8.00" viewBox="-0.5 -0.5 8.60 8.00"><rect x="0" y="0" width="7.60" height="7.00" fill="#f2f6fa" stroke="#4a5a68" stroke-width="0.8"/><path d="M1.37 3.15 L3.19 5.46 L6.99 0.35" fill="none" stroke="#000" stroke-width="1.25" stroke-linecap="square"/></svg>
<div class="t" style="left:125.00px;top:355.97px;font-size:5.7px;color:#1c2a44;">M3.6(T,C)</div>
<div class="t" style="left:166.40px;top:354.23px;font-size:6.7px;color:#1a1a1a;">Insulation defect by aging material</div>
<svg class="a" style="left:269.30px;top:349.58px;overflow:visible" width="11.80" height="11.80"><circle cx="5.90" cy="5.90" r="4.90" fill="#0c9e45" stroke="#0a8a3a" stroke-width="0.7"/><g transform="translate(5.90 7.92) scale(0.1)"><text x="0" y="0" font-size="56.0" text-anchor="middle" fill="#d8f5dc" font-family="Liberation Sans">T1</text></g></svg>
<svg class="a" style="left:286.90px;top:349.58px;overflow:visible" width="11.80" height="11.80"><circle cx="5.90" cy="5.90" r="4.90" fill="#fff" stroke="#444" stroke-width="0.7"/><g transform="translate(5.90 7.92) scale(0.1)"><text x="0" y="0" font-size="56.0" text-anchor="middle" fill="#222" font-family="Liberation Sans">C1</text></g></svg>
<svg class="a" style="left:304.50px;top:349.58px;overflow:visible" width="11.80" height="11.80"><circle cx="5.90" cy="5.90" r="4.90" fill="#fff" stroke="#444" stroke-width="0.7"/><g transform="translate(5.90 7.92) scale(0.1)"><text x="0" y="0" font-size="56.0" text-anchor="middle" fill="#222" font-family="Liberation Sans">C2</text></g></svg>
<div class="a" style="left:164.70px;top:361.16px;width:103.30px;height:10.36px;background:#d4d4d4;"></div>
<div class="a" style="left:269.40px;top:361.16px;width:46.80px;height:10.36px;background:#d4d4d4;"></div>
<svg class="a" style="left:114.30px;top:363.46px;overflow:visible" width="8.60" height="8.00" viewBox="-0.5 -0.5 8.60 8.00"><rect x="0" y="0" width="7.60" height="7.00" fill="#f2f6fa" stroke="#4a5a68" stroke-width="0.8"/><path d="M1.37 3.15 L3.19 5.46 L6.99 0.35" fill="none" stroke="#000" stroke-width="1.25" stroke-linecap="square"/></svg>
<div class="t" style="left:125.00px;top:366.33px;font-size:5.7px;color:#1c2a44;">M3.7(C)</div>
<div class="t" style="left:166.40px;top:364.59px;font-size:6.7px;color:#1a1a1a;">Oil aging by short circuit</div>
<svg class="a" style="left:269.30px;top:359.94px;overflow:visible" width="11.80" height="11.80"><circle cx="5.90" cy="5.90" r="4.90" fill="#fff" stroke="#444" stroke-width="0.7"/><g transform="translate(5.90 7.92) scale(0.1)"><text x="0" y="0" font-size="56.0" text-anchor="middle" fill="#222" font-family="Liberation Sans">C1</text></g></svg>
<svg class="a" style="left:304.50px;top:359.94px;overflow:visible" width="11.80" height="11.80"><circle cx="5.90" cy="5.90" r="4.90" fill="#fff" stroke="#444" stroke-width="0.7"/><g transform="translate(5.90 7.92) scale(0.1)"><text x="0" y="0" font-size="56.0" text-anchor="middle" fill="#222" font-family="Liberation Sans">C2</text></g></svg>
<div class="a" style="left:316.5px;top:309.2px;width:353px;height:51.1px;background:#00a84e;background-image:linear-gradient(90deg, rgba(255,255,255,.85) 1px, transparent 1px),linear-gradient(rgba(255,255,255,.85) 1px, transparent 1px);background-size:29.42px 10.22px;background-position:-1px -1px"></div>
<div class="a" style="left:112.00px;top:372.60px;width:203.60px;height:10.00px;background:#8c8c8c;"></div>
<div class="t" style="left:113.50px;top:375.91px;font-size:6.6px;color:#dcdcdc;">Total risk</div>
<div class="a" style="left:316.5px;top:372.8px;width:353px;height:9.8px;background:repeating-linear-gradient(135deg,#a2c4ab 0px,#a2c4ab 0.8px,#eef4ef 0.8px,#eef4ef 1.9px)"></div>
<div class="a" style="left:345.42px;top:372.8px;width:0.9px;height:9.8px;background:rgba(255,255,255,.7)"></div>
<div class="a" style="left:374.84px;top:372.8px;width:0.9px;height:9.8px;background:rgba(255,255,255,.7)"></div>
<div class="a" style="left:404.26px;top:372.8px;width:0.9px;height:9.8px;background:rgba(255,255,255,.7)"></div>
<div class="a" style="left:433.68px;top:372.8px;width:0.9px;height:9.8px;background:rgba(255,255,255,.7)"></div>
<div class="a" style="left:463.10px;top:372.8px;width:0.9px;height:9.8px;background:rgba(255,255,255,.7)"></div>
<div class="a" style="left:492.52px;top:372.8px;width:0.9px;height:9.8px;background:rgba(255,255,255,.7)"></div>
<div class="a" style="left:521.94px;top:372.8px;width:0.9px;height:9.8px;background:rgba(255,255,255,.7)"></div>
<div class="a" style="left:551.36px;top:372.8px;width:0.9px;height:9.8px;background:rgba(255,255,255,.7)"></div>
<div class="a" style="left:580.78px;top:372.8px;width:0.9px;height:9.8px;background:rgba(255,255,255,.7)"></div>
<div class="a" style="left:610.20px;top:372.8px;width:0.9px;height:9.8px;background:rgba(255,255,255,.7)"></div>
<div class="a" style="left:639.62px;top:372.8px;width:0.9px;height:9.8px;background:rgba(255,255,255,.7)"></div>
<svg class="a" style="left:310.5px;top:375px" width="4" height="6"><path d="M0.6 2.4 L1.8 1 L3 2.4 Z M0.6 3.4 L1.8 4.8 L3 3.4 Z" fill="#bbb"/></svg>
<svg class="a" style="left:323px;top:386.5px" width="16" height="10"><path d="M0.5 9 L15.3 9 L7.9 0.2 Z" fill="#000"/></svg>
<div class="a" style="left:689.8px;top:290.00px;width:6px;height:6px;background:#e03a10"></div>
<div class="t" style="left:698.75px;top:291.37px;font-size:5.7px;color:#333;">Downtime risk &gt;15%</div>
<div class="a" style="left:689.8px;top:299.30px;width:6px;height:6px;background:#f6cc00"></div>
<div class="t" style="left:698.75px;top:300.67px;font-size:5.7px;color:#333;">Downtime risk 5%-15%</div>
<div class="a" style="left:689.8px;top:308.60px;width:6px;height:6px;background:#10a84a"></div>
<div class="t" style="left:698.75px;top:309.97px;font-size:5.7px;color:#333;">Downtime risk &lt;5%</div>
<div class="a" style="left:689.8px;top:317.90px;width:6px;height:6px;background:#5c5c5c"></div>
<div class="t" style="left:698.75px;top:319.27px;font-size:5.7px;color:#333;">High prognostic strength</div>
<div class="a" style="left:689.8px;top:327.20px;width:6px;height:6px;background:repeating-linear-gradient(135deg,#333 0px,#333 1px,#ddd 1px,#ddd 1.8px)"></div>
<div class="t" style="left:698.75px;top:328.57px;font-size:5.7px;color:#333;">Medium prognostic strength</div>
<div class="a" style="left:689.8px;top:336.50px;width:6px;height:6px;background:repeating-linear-gradient(135deg,#aaa 0px,#aaa 0.7px,#fff 0.7px,#fff 1.8px)"></div>
<div class="t" style="left:698.75px;top:337.87px;font-size:5.7px;color:#333;">Low prognostic strength</div>
<div class="a" style="left:112.40px;top:385.40px;width:85.60px;height:11.30px;background:#000;"></div>
<div class="t" style="left:113.90px;top:389.30px;font-size:6.5px;color:#fff;">Next maintenance</div>
<div class="a" style="left:199.6px;top:385px;width:55.2px;height:11.7px;background:#fff;border:1px solid #aaa"></div>
<div class="t" style="left:201.00px;top:388.14px;font-size:8.1px;color:#1a1a1a;">22.Mar'15</div>
<svg class="a" style="left:257px;top:384.5px" width="12" height="12"><rect x="0.9" y="0.9" width="9.8" height="10.2" fill="#f6f6f6" stroke="#8a8a8a" stroke-width="0.8"/><rect x="1.2" y="1.2" width="9.2" height="2" fill="#9a9a9a"/><path d="M1 5.6 H10.6 M1 8.2 H10.6 M4.2 3.3 V11 M7.4 3.3 V11" stroke="#b4b4b4" stroke-width="0.5"/><rect x="4.4" y="5.9" width="2.8" height="2.1" fill="#777"/></svg>
<div class="a" style="left:112.40px;top:399.25px;width:51.60px;height:29.35px;background:#000;"></div>
<div class="t" style="left:113.90px;top:403.13px;font-size:6.7px;color:#fff;">Prognostic</div>
<div class="t" style="left:113.90px;top:412.33px;font-size:6.7px;color:#fff;">horizon (zoom)</div>
<div class="a" style="left:164.00px;top:399.25px;width:104.60px;height:29.35px;background:#b5d9ef;"></div>
<div class="radio" style="left:166.10px;top:400.30px;width:8.60px;height:8.60px"></div>
<div class="t" style="left:177.70px;top:403.47px;font-size:6.65px;color:#1a1a1a;">Short (12 days)</div>
<div class="radio on" style="left:166.10px;top:409.65px;width:8.60px;height:8.60px"></div>
<div class="t" style="left:177.70px;top:412.82px;font-size:6.65px;color:#1a1a1a;">Long (12 weeks)</div>
<div class="radio" style="left:166.10px;top:419.00px;width:8.60px;height:8.60px"></div>
<div class="t" style="left:177.70px;top:422.17px;font-size:6.65px;color:#1a1a1a;">Maximum (12 quarters)</div>
<div class="a" style="left:272.10px;top:399.70px;width:43.50px;height:9.40px;background:#000;"></div>
<div class="t" style="left:273.50px;top:402.50px;font-size:6.5px;color:#fff;">View</div>
<div class="a" style="left:315.60px;top:399.70px;width:88.50px;height:9.40px;background:#b5d9ef;"></div>
<svg class="a" style="left:318.30px;top:400.10px;overflow:visible" width="8.20" height="8.20" viewBox="-0.5 -0.5 8.20 8.20"><rect x="0" y="0" width="7.20" height="7.20" fill="#e4f0f8" stroke="#8fa8bb" stroke-width="0.8"/></svg>
<div class="t" style="left:329.70px;top:402.50px;font-size:6.5px;color:#1a1a1a;">Percentages</div>
<div class="t" style="left:732.00px;top:396.25px;font-size:9.75px;font-weight:bold;color:#1a1a1a;">Schedule</div>
<div class="a" style="left:740.00px;top:408.10px;width:35.80px;height:81.00px;background:#000;"></div>
<div class="bd" style="left:746.20px;top:412.20px;width:23.2px;height:23.2px;background:#929292;border:1px solid #c2c2c2;color:#c6c6c6;font-size:5.5px;line-height:21.2px;text-rendering:geometricPrecision">Risky</div>
<div class="bd" style="left:746.20px;top:437.30px;width:23.2px;height:23.2px;background:#929292;border:1px solid #c2c2c2;color:#c6c6c6;font-size:5.5px;line-height:21.2px;text-rendering:geometricPrecision">Bold</div>
<div class="bd" style="left:746.20px;top:461.30px;width:23.2px;height:23.2px;background:#17a84c;border:1px solid #d0f2da;color:#ffffff;font-size:5.5px;line-height:21.2px;text-rendering:geometricPrecision">Safe</div>
<div class="t" style="left:27.70px;top:513.63px;font-size:8px;color:#3a3a3a;">Copyright © 2015 by Cassantec Ltd., Zurich, Switzerland</div>
<svg class="a" style="left:574px;top:512px" width="11" height="9"><rect x="1" y="1.5" width="8.5" height="6" fill="#f4f4f4" stroke="#8a8a8a" stroke-width="0.7"/><path d="M1 1.8 L5.25 5 L9.5 1.8" fill="none" stroke="#8a8a8a" stroke-width="0.7"/></svg>
<svg class="a" style="left:641px;top:511.5px" width="11" height="10"><rect x="2.5" y="1" width="5.5" height="3" fill="#dde" stroke="#667" stroke-width="0.6"/><rect x="1" y="4" width="8.5" height="4" rx="1" fill="#3c4a66"/><rect x="2.5" y="6.5" width="5.5" height="2.5" fill="#eee" stroke="#778" stroke-width="0.5"/></svg>
<svg class="a" style="left:707px;top:511px" width="12" height="11"><rect x="1" y="0.8" width="9.5" height="9.5" fill="#fff" stroke="#d9534f" stroke-width="0.9"/><path d="M3 8.5 L5.7 2.5 L8.6 8.5 M3.6 6.8 H7.8" fill="none" stroke="#d9534f" stroke-width="0.8"/></svg>
<div class="t" style="left:585.70px;top:513.98px;font-size:7.7px;color:#3a3a3a;">Email</div>
<div class="t" style="left:652.30px;top:513.81px;font-size:7.9px;color:#3a3a3a;">Print</div>
<div class="t" style="left:719.80px;top:514.32px;font-size:7.3px;color:#3a3a3a;">PDF</div>
</body></html>
